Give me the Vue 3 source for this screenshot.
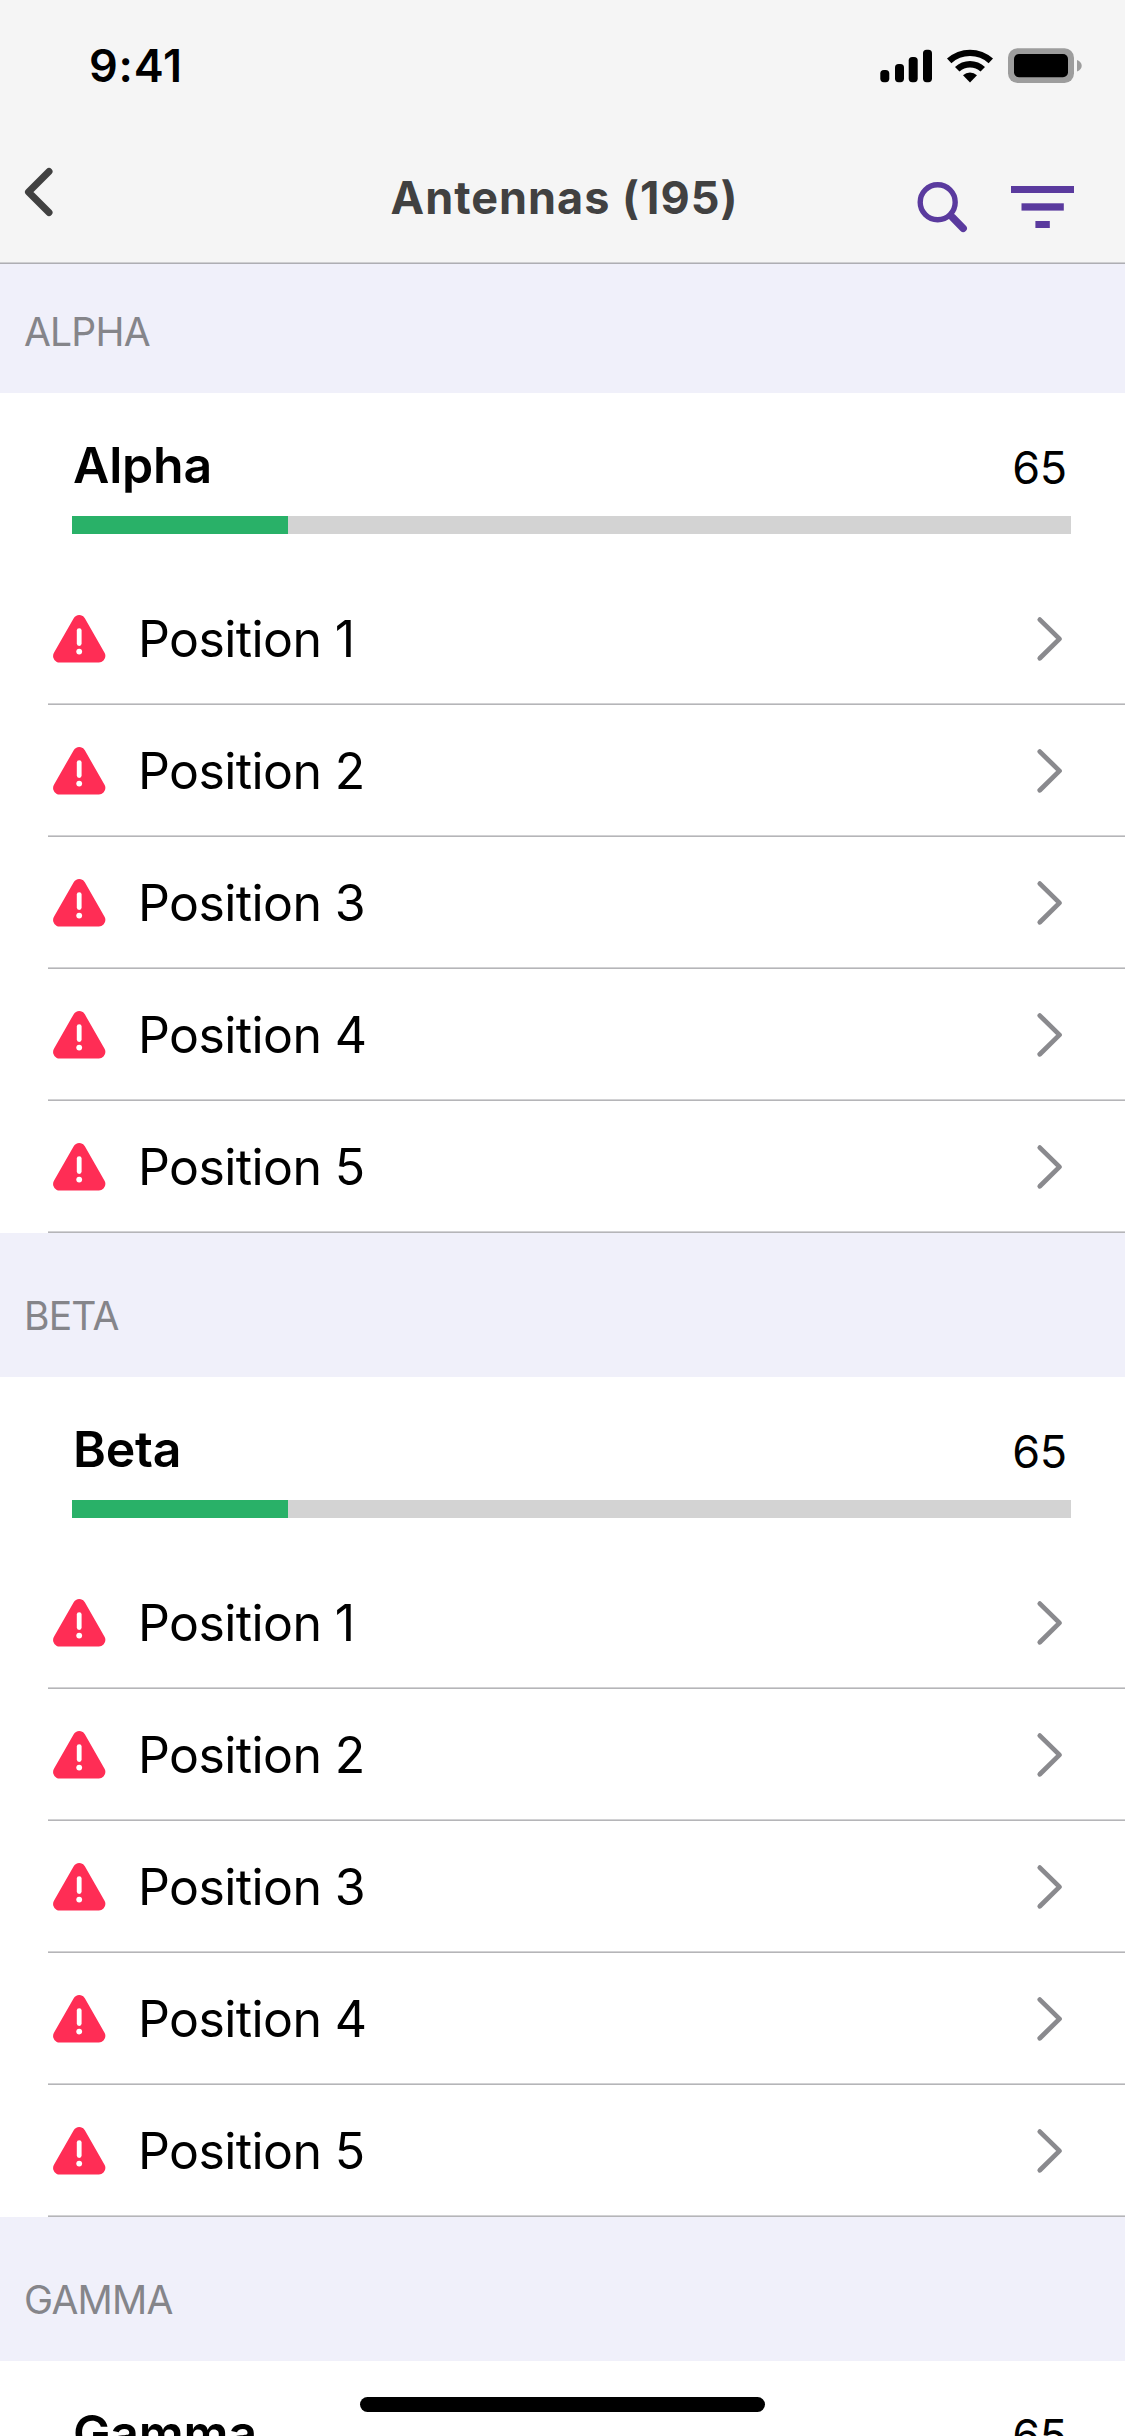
<script setup>
const positions = ['Position 1', 'Position 2', 'Position 3', 'Position 4', 'Position 5']
const sectors = [
  { name: 'Alpha', count: 65, done: 21.62, positions },
  { name: 'Beta', count: 65, done: 21.62, positions },
  { name: 'Gamma', count: 65, done: 21.62, positions: [] },
]
</script>

<template>
  <div class="screen">
    <header class="top">
      <div class="status">
        <span class="time">9:41</span>
        <svg class="status-icons" width="204" height="40" viewBox="878 45 204 40">
          <rect x="880.3" y="70" width="9" height="12.2" rx="3.6" />
          <rect x="895" y="64" width="9" height="18.2" rx="3.6" />
          <rect x="908.7" y="57" width="9" height="25.2" rx="3.6" />
          <rect x="923" y="49.7" width="9" height="32.5" rx="3.6" />
          <path d="M947 58.6A34 34 0 0 1 993 58.6L988.600 63.200A27.500 27.500 0 0 0 951.400 63.200Z" />
          <path d="M955 67A21.500 21.500 0 0 1 985 67L980.500 71.600A15.500 15.500 0 0 0 959.500 71.600Z" />
          <path d="M963 75.200A10.500 10.500 0 0 1 977 75.200L970 82.400Z" />
          <rect x="1008" y="48.200" width="66" height="34.800" rx="9.500" fill="#9d9d9d" />
          <rect x="1014" y="54" width="54" height="23.200" rx="5" />
          <path d="M1077 60C1083.300 62.500 1083.300 69 1077 71.500Z" fill="#9d9d9d" />
        </svg>
      </div>
      <nav class="nav">
        <button class="back" aria-label="Back">
          <svg width="40" height="52" viewBox="18 166 40 52">
            <path d="M49 171.500L28.500 192L49 212.500" fill="none" stroke="#414141" stroke-width="7" stroke-linecap="round" stroke-linejoin="round" />
          </svg>
        </button>
        <h1 class="title">Antennas (195)</h1>
        <div class="actions">
          <svg width="56" height="56" viewBox="914 179 56 56" fill="none" stroke="#5a3a9e">
            <circle cx="937.700" cy="202.300" r="17.500" stroke-width="5.400" />
            <path d="M952.500 217.300L963.200 228.300" stroke-width="7.400" stroke-linecap="round" />
          </svg>
          <svg width="64" height="56" viewBox="1011 179 64 56" fill="#5a3a9e">
            <rect x="1011" y="186" width="63" height="7" />
            <rect x="1021.500" y="203.300" width="42.300" height="7.300" />
            <rect x="1035.400" y="221" width="14.400" height="7" />
          </svg>
        </div>
      </nav>
    </header>

    <main class="list">
      <section v-for="sector in sectors" :key="sector.name" class="sector">
        <h2 class="label">{{ sector.name.toUpperCase() }}</h2>
        <div class="summary">
          <div class="summary-line">
            <strong class="name">{{ sector.name }}</strong>
            <span class="count">{{ sector.count }}</span>
          </div>
          <div class="track"><div class="fill" :style="{ width: sector.done + '%' }"></div></div>
        </div>
        <ul class="rows">
          <li v-for="position in sector.positions" :key="position" class="row">
            <svg class="alert" width="54" height="50" viewBox="52 614 54 50">
              <path d="M79.200 621.600L59.600 656L98.900 656Z" fill="#ff2d55" stroke="#ff2d55" stroke-width="13" stroke-linejoin="round" />
              <path d="M79.200 630.600V643.500" stroke="#fff" stroke-width="4.800" stroke-linecap="round" />
              <circle cx="79.200" cy="651.600" r="2.900" fill="#fff" />
            </svg>
            <span class="position">{{ position }}</span>
            <svg class="chevron" width="30" height="46" viewBox="1034 616 30 46">
              <path d="M1039.800 619.600L1059.500 638.900L1039.800 658.200" fill="none" stroke="#8a8a8e" stroke-width="4.800" stroke-linecap="round" stroke-linejoin="round" />
            </svg>
          </li>
        </ul>
      </section>
    </main>
    <div class="home-indicator"></div>
  </div>
</template>

<style>
body {
  margin: 0;
}
</style>

<style scoped>
.screen {
  position: relative;
  width: 1125px;
  height: 2436px;
  overflow: hidden;
  background: #fff;
  color: #000;
  font-family: Inter, "Liberation Sans", sans-serif;
}

.top {
  height: 264px;
  background: #f5f5f5;
  box-shadow: inset 0 -1px #aeaeb3, inset 0 -2px #cfcfd1;
}

.status {
  display: flex;
  justify-content: space-between;
  height: 132px;
  padding: 0 43px 0 89px;
}

.time {
  font-size: 45px;
  font-weight: 600;
  line-height: 131px;
  letter-spacing: 0.8px;
}

.status-icons {
  margin-top: 45px;
}

.nav {
  display: grid;
  grid-template-columns: 250px 1fr 250px;
  height: 132px;
}

.back {
  display: flex;
  margin: 0;
  padding: 34px 0 0 18px;
  border: 0;
  background: none;
}

.title {
  margin: 0;
  padding-left: 4px;
  color: #414141;
  font-size: 45px;
  font-weight: 700;
  line-height: 131px;
  letter-spacing: 1.01px;
  text-align: center;
}

.actions {
  display: flex;
  justify-content: flex-end;
  gap: 41px;
  padding: 47px 50px 0 0;
}

.label {
  display: flex;
  box-sizing: border-box;
  align-items: flex-end;
  height: 144px;
  margin: 0;
  padding: 0 0 31px 24px;
  background: #f0f0fa;
  color: #85858a;
  font-size: 39px;
  font-weight: 400;
  line-height: 60px;
  letter-spacing: -0.8px;
}

.sector:first-child .label {
  height: 129px;
}

.summary {
  box-sizing: border-box;
  height: 180px;
  padding: 42px 54px 0 72px;
}

.summary-line {
  display: flex;
  justify-content: space-between;
  height: 81px;
  padding: 0 4px 0 1px;
}

.name {
  font-size: 50px;
  font-weight: 600;
  line-height: 60px;
  letter-spacing: -0.2px;
}

.count {
  font-size: 45px;
  line-height: 65px;
  letter-spacing: -0.2px;
}

.track {
  height: 18px;
  background: #d3d3d3;
}

.fill {
  height: 100%;
  background: #29b168;
}

.rows {
  margin: 0;
  padding: 0 0 0 48px;
  list-style: none;
}

.row {
  display: flex;
  box-sizing: border-box;
  align-items: center;
  height: 132px;
  padding: 0 61px 0 4px;
  box-shadow: inset 0 -1px #b5b5b8, inset 0 -2px #d2d2d4;
}

.position {
  flex: 1;
  margin-left: 32px;
  font-size: 50px;
  line-height: 60px;
  letter-spacing: -0.6px;
}

.home-indicator {
  position: absolute;
  bottom: 24px;
  left: 360px;
  width: 405px;
  height: 15px;
  border-radius: 8px;
  background: #000;
}
</style>
